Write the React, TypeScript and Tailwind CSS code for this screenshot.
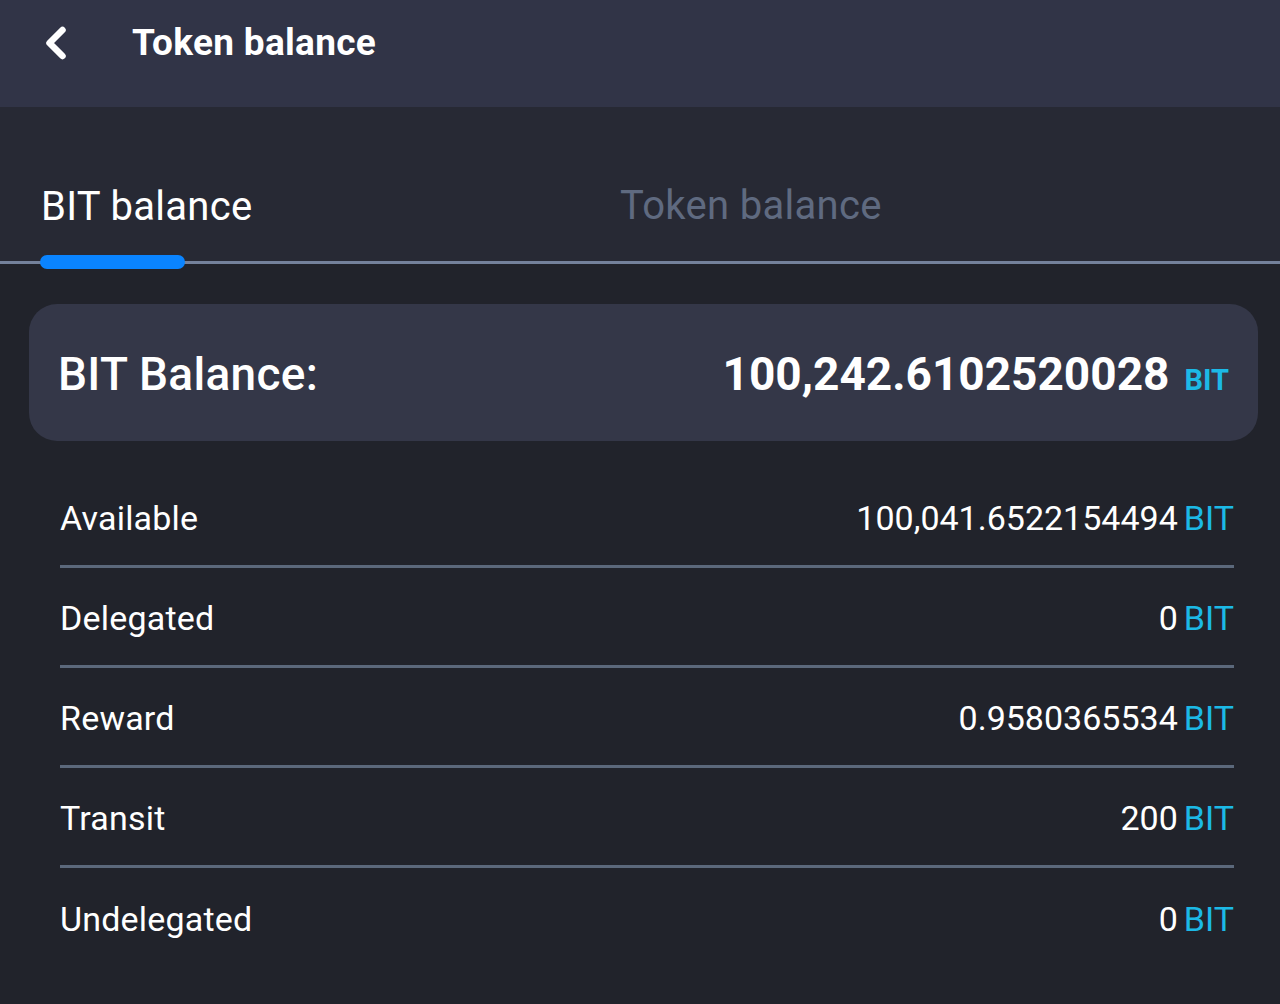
import { ChevronLeft } from "lucide-react";

type Row = { label: string; value: string };

const ROWS: Row[] = [
  { label: "Available", value: "100,041.6522154494" },
  { label: "Delegated", value: "0" },
  { label: "Reward", value: "0.9580365534" },
  { label: "Transit", value: "200" },
  { label: "Undelegated", value: "0" },
];

export default function App() {
  return (
    <div className="flex h-[1004px] w-[1280px] flex-col overflow-hidden bg-[#21232b] font-['Roboto',sans-serif] text-white">
      <header className="flex h-[107px] shrink-0 items-start bg-[#313447] pt-[21px]">
        <div className="flex h-[44px] items-center">
          <ChevronLeft className="ml-[30px] h-[52px] w-[52px]" strokeWidth={3} />
          <h1 className="ml-[50px] text-[37px] font-bold tracking-[0.3px]">Token balance</h1>
        </div>
      </header>

      <nav className="relative flex h-[156px] shrink-0 items-end bg-[#272934]">
        <div className="absolute bottom-[-1px] left-0 right-0 h-[3px] bg-[#74819b]" />
        <div className="flex w-1/2 flex-col pl-[41px]">
          <span className="text-[40px] leading-none tracking-[0.3px]">BIT balance</span>
          <div className="relative z-10 mt-[28px] mb-[-6px] h-[14px] w-[145px] -translate-x-[1px] rounded-full bg-[#0a84ff]" />
        </div>
        <div className="flex w-1/2 flex-col">
          <span className="-ml-[20px] mb-[37px] text-[40px] leading-none tracking-[0.3px] text-[#5f6a80]">
            Token balance
          </span>
        </div>
      </nav>

      <section className="ml-[29px] mr-[22px] mt-[41px] flex h-[137px] items-center justify-between rounded-[28px] bg-[#343748] pl-[29px] pr-[29px] pt-[4px]">
        <span className="text-[46px] font-medium tracking-[0.3px]">BIT Balance:</span>
        <span className="flex items-baseline">
          <span className="text-[46px] font-bold">100,242.6102520028</span>
          <span className="ml-[15px] text-[29px] font-bold text-[#1cb9e6]">BIT</span>
        </span>
      </section>

      <div className="ml-[60px] mr-[46px] mt-[27px] flex flex-col">
        {ROWS.map((row, i) => (
          <div
            key={row.label}
            className={`flex h-[100px] items-center justify-between pt-[3px] ${
              i < ROWS.length - 1 ? "border-b-[3px] border-[#5b687b]" : ""
            }`}
          >
            <span className="text-[34px] tracking-[0.2px]">{row.label}</span>
            <span className="text-[34px]">
              {row.value}
              <span className="ml-[6px] text-[#1cb9e6]">BIT</span>
            </span>
          </div>
        ))}
      </div>
    </div>
  );
}
